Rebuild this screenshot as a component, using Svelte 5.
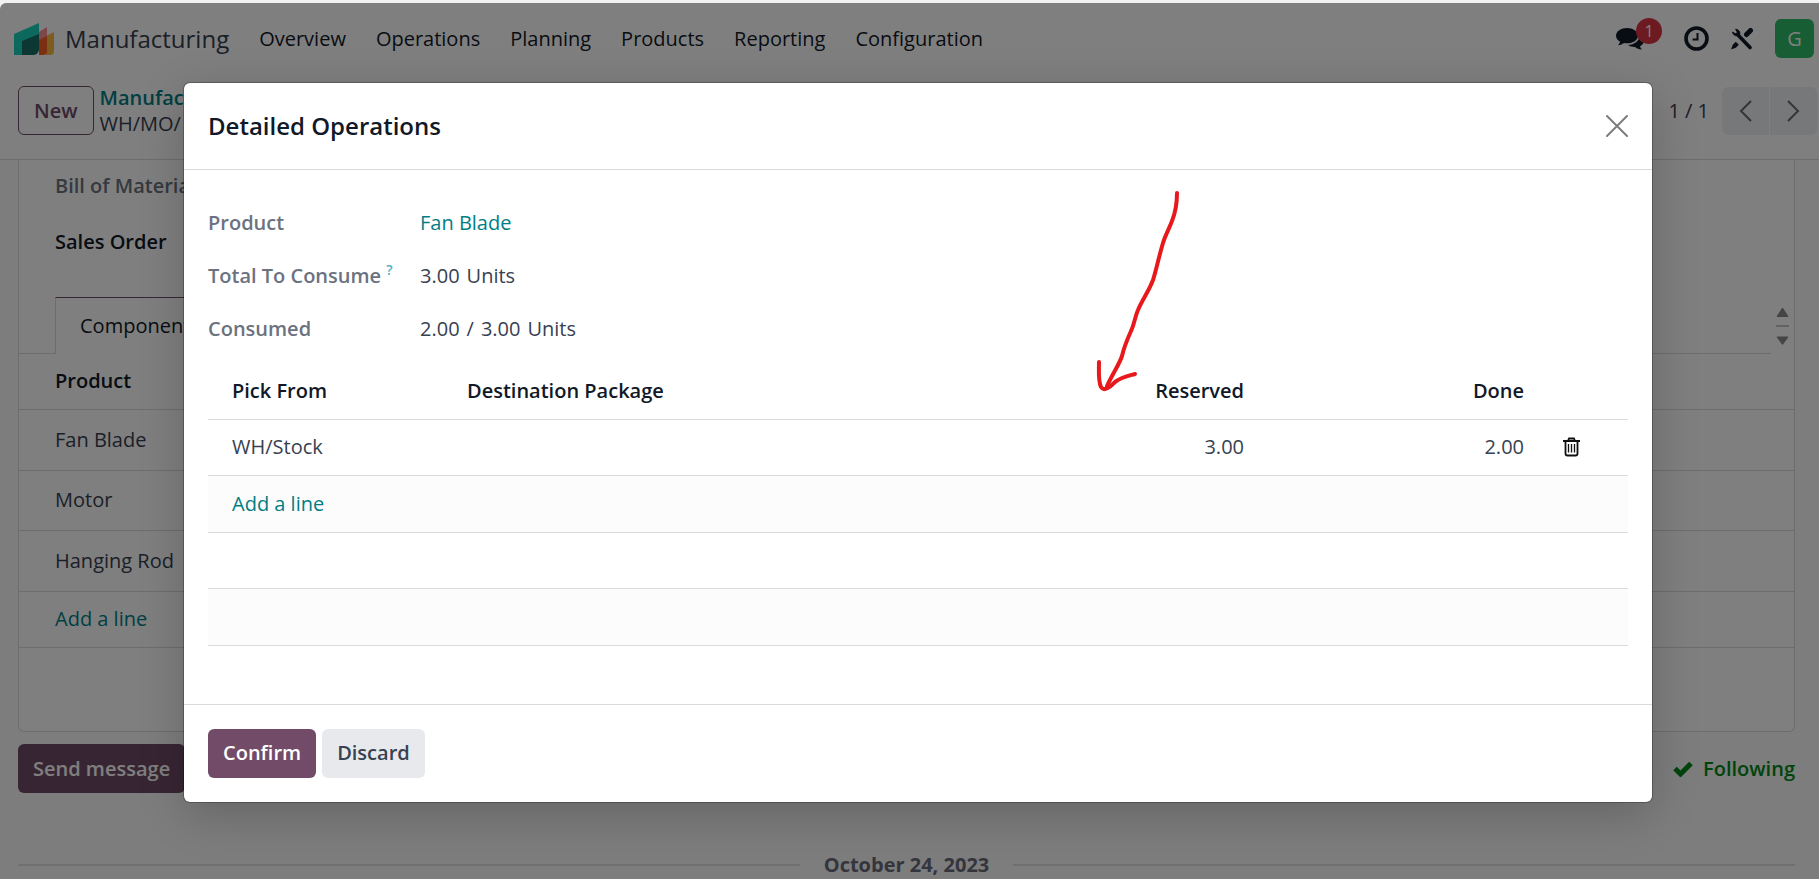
<script>
	// DATA
	const menus = ["Overview", "Operations", "Planning", "Products", "Reporting", "Configuration"];
	const components = ["Fan Blade", "Motor", "Hanging Rod"];

	// STATE
	let lines = $state([{ from: "WH/Stock", pack: "", reserved: 3, done: 2 }]);

	// METHODS
	function removeLine(index) {
		lines.splice(index, 1);
	}
</script>

<div class="page">
	<header class="navbar">
		<svg class="logo" viewBox="0 0 40 32" aria-hidden="true">
			<path fill="#fbb945" d="M32 13l8-4v19a4 4 0 0 1-4 4h-4z" />
			<path fill="#f86126" d="M25 10l8-5v23a4 4 0 0 1-4 4h-4z" />
			<path fill="#f78f97" d="M25 9l8-5v9l-8 4z" />
			<path fill="#1ad3bb" d="M0 11L25 0v26a6 6 0 0 1-6 6H0z" />
			<path fill="#1a6f66" d="M8 18l17-7v15a6 6 0 0 1-6 6H8z" />
		</svg>
		<a class="brand" href="#app">Manufacturing</a>
		<nav>
			{#each menus as menu}
				<a href="#app">{menu}</a>
			{/each}
		</nav>
		<div class="systray">
			<button class="chat" aria-label="Messages">
				<svg width="28" height="24" viewBox="0 0 28 24" fill="currentColor">
					<path d="M11 1C5 1 0 4.400 0 8.700c0 2.500 1.600 4.600 4.100 6-.4 1.500-1.200 2.500-2.100 3.500 2.700-.2 4.600-1.200 6-2.200 1 .2 2 .3 3 .3 6 0 11-3.300 11-7.600S17 1 11 1z" />
					<path d="M23.500 8.500c.2 5.300-5.200 9.400-11.500 9.600 1.800 1.300 4.200 2 7 1.900 1.700 1.400 3.700 2.300 7 2.500-1-1-1.700-2-2-3.300 2.400-1.300 3.900-3.100 3.900-5.300 0-2.200-1.700-4.200-4.400-5.400z" />
				</svg>
				<span class="badge">1</span>
			</button>
			<button aria-label="Activities">
				<svg width="25" height="25" viewBox="0 0 25 25" fill="none" stroke="currentColor">
					<circle cx="12.500" cy="12.500" r="10.500" stroke-width="3.600" />
					<path d="M13.500 7v6.500H8.500" stroke-width="2" />
				</svg>
			</button>
			<button aria-label="Tools">
				<svg width="22" height="22" viewBox="0 0 22 22" fill="none" stroke="currentColor">
					<path d="M7.500 7.500L19 19.500" stroke-width="3.600" stroke-linecap="round" />
					<path d="M1.500 4.200l3.200 1.600 1.600-1.600L4.700 1.200A4.300 4.300 0 0 1 8.600 7 4.500 4.500 0 0 1 1.500 4.200z" fill="currentColor" stroke-width="1" />
					<path d="M15.500 6.500L19.500 2.500" stroke-width="5" stroke-linecap="round" />
					<path d="M0 21.500l1.800-4.800 3-3 3 3-3 3z" fill="currentColor" stroke="none" />
				</svg>
			</button>
			<button class="avatar" aria-label="User">G</button>
		</div>
	</header>

	<div class="control-panel">
		<button class="btn outline">New</button>
		<div class="breadcrumb">
			<a href="#app">Manufacturing</a>
			<span>WH/MO/</span>
		</div>
		<div class="pager">
			<span>1 / 1</span>
			<div class="pager-buttons">
				<button aria-label="Previous">
					<svg width="13" height="22" viewBox="0 0 13 22" fill="none" stroke="currentColor" stroke-width="2"><path d="M12 1L2 11l10 10" /></svg>
				</button>
				<button aria-label="Next">
					<svg width="13" height="22" viewBox="0 0 13 22" fill="none" stroke="currentColor" stroke-width="2"><path d="M1 1l10 10L1 21" /></svg>
				</button>
			</div>
		</div>
	</div>

	<main>
		<section class="sheet">
			<div class="sheet-fields">
				<span class="muted">Bill of Material</span>
				<span>Sales Order</span>
			</div>
			<div class="tabs">
				<button class="tab">Components</button>
				<div class="tab-line"></div>
				<div class="scroller">
					<svg width="13" height="40" viewBox="0 0 13 40" fill="currentColor" aria-hidden="true">
						<path d="M6.500 2L12 10.500H1z" stroke="currentColor" stroke-linejoin="round" />
						<path d="M0 19.500h13v1H0z" />
						<path d="M6.500 38.500L12 31H1z" stroke="currentColor" stroke-linejoin="round" />
					</svg>
				</div>
			</div>
			<table class="components">
				<thead>
					<tr><th>Product</th></tr>
				</thead>
				<tbody>
					{#each components as component}
						<tr><td>{component}</td></tr>
					{/each}
					<tr class="add"><td><a href="#app">Add a line</a></td></tr>
				</tbody>
			</table>
		</section>

		<div class="chatter">
			<button class="btn primary">Send message</button>
			<button class="following">
				<svg width="20" height="16" viewBox="0 0 20 16" fill="none" stroke="currentColor" stroke-width="5"><path d="M2 7.500l5.500 5.500L18 2.500" /></svg>
				Following
			</button>
		</div>
		<div class="date"><span>October 24, 2023</span></div>
	</main>

	<div class="backdrop">
		<div class="modal" role="dialog" aria-labelledby="modal-title">
			<div class="modal-header">
				<h4 id="modal-title">Detailed Operations</h4>
				<button aria-label="Close">
					<svg width="22" height="22" viewBox="0 0 22 22" fill="none" stroke="currentColor" stroke-width="2" stroke-linecap="round"><path d="M1 1l20 20M21 1L1 21" /></svg>
				</button>
			</div>
			<div class="modal-body">
				<dl>
					<dt>Product</dt>
					<dd><a href="#app">Fan Blade</a></dd>
					<dt>Total To Consume <sup>?</sup></dt>
					<dd><span>3.00</span><span>Units</span></dd>
					<dt>Consumed</dt>
					<dd><span>2.00</span><span>/</span><span>3.00</span><span>Units</span></dd>
				</dl>
				<table class="operations">
					<thead>
						<tr>
							<th class="from">Pick From</th>
							<th>Destination Package</th>
							<th class="number">Reserved</th>
							<th class="number done">Done</th>
							<th class="action"></th>
						</tr>
					</thead>
					<tbody>
						{#each lines as line, i}
							<tr>
								<td>{line.from}</td>
								<td>{line.pack}</td>
								<td class="number">{line.reserved.toFixed(2)}</td>
								<td class="number">{line.done.toFixed(2)}</td>
								<td class="action">
									<button aria-label="Delete" onclick={() => removeLine(i)}>
										<svg width="17" height="20" viewBox="0 0 17 20" fill="none" stroke="currentColor" stroke-width="1.800">
											<path d="M0 4h17M2.500 4v12.500a2 2 0 0 0 2 2h8a2 2 0 0 0 2-2V4M5 4l1-2.500h5L12 4" />
											<path d="M5.500 7v8.500M8.500 7v8.500M11.500 7v8.500" stroke-width="1.300" />
										</svg>
									</button>
								</td>
							</tr>
						{/each}
						<tr><td colspan="5"><a href="#app">Add a line</a></td></tr>
						<tr><td colspan="5"></td></tr>
						<tr><td colspan="5"></td></tr>
					</tbody>
				</table>
				<svg class="arrow" viewBox="0 0 90 210" aria-hidden="true">
					<path d="M84 6C84 14 83 24 79 34C76 42 72 49 70 56C66 69 63 84 60 93C56 104 49 113 45 123C42 130 41 138 38 144C34 153 31 160 29 169C26 178 20 186 14 199" />
					<path d="M6 175C6 185 5 194 8 200C11 205 17 200 22 195C29 190 35 189 42 187" />
				</svg>
			</div>
			<div class="modal-footer">
				<button class="btn primary">Confirm</button>
				<button class="btn secondary">Discard</button>
			</div>
		</div>
	</div>
</div>

<style>
	:global(body) {
		background: #f1f1f1;
		overflow: hidden;
	}
	.page {
		position: relative;
		display: flex;
		flex-direction: column;
		height: calc(100vh - 3px);
		margin-top: 3px;
		border-top-left-radius: 6px;
		overflow: hidden;
		background: #f8fbf9;
		color: #374151;
		font-family: "Open Sans", "Noto Sans", sans-serif;
		font-size: 20px;
		line-height: 28px;
		white-space: nowrap;
	}
	button {
		display: flex;
		align-items: center;
		justify-content: center;
		padding: 0;
		border: 0;
		background: none;
		color: inherit;
		font: inherit;
		cursor: pointer;
	}
	a {
		color: #017e84;
		text-decoration: none;
	}
	.btn {
		height: 49px;
		padding: 0 15px;
		border-radius: 6px;
		font-weight: 600;
	}
	.primary {
		background: #714b67;
		color: #fff;
	}
	.secondary {
		background: #e7e9ed;
	}
	.outline {
		border: 1px solid #714b67;
		color: #714b67;
	}

	/* NAVBAR */
	.navbar {
		display: flex;
		align-items: center;
		flex: none;
		height: 71px;
		padding: 0 5px 0 14px;
		box-sizing: border-box;
		background: #fff;
	}
	.logo {
		width: 40px;
		height: 32px;
	}
	.brand {
		margin: 0 30px 0 11px;
		color: #374151;
		font-size: 24px;
	}
	nav {
		display: flex;
		gap: 30px;
	}
	nav a {
		color: #111827;
	}
	.systray {
		display: flex;
		align-items: center;
		gap: 22px;
		margin-left: auto;
		color: #111827;
	}
	.chat {
		position: relative;
		margin-right: 18px;
	}
	.badge {
		position: absolute;
		top: -9px;
		left: 20px;
		width: 26px;
		border-radius: 13px;
		background: #dc3545;
		color: #fff;
		font-size: 16px;
		line-height: 26px;
	}
	.avatar {
		width: 39px;
		height: 39px;
		border-radius: 6px;
		background: #2ebd69;
		color: #fff;
	}

	/* CONTROL PANEL */
	.control-panel {
		display: flex;
		align-items: center;
		flex: none;
		box-sizing: border-box;
		height: 86px;
		padding: 0 2px 12px 18px;
		border-bottom: 1px solid #d8dadd;
		background: #fff;
	}
	.breadcrumb {
		display: flex;
		flex-direction: column;
		margin-left: 6px;
		line-height: 26px;
	}
	.breadcrumb a {
		font-weight: 600;
	}
	.pager {
		display: flex;
		align-items: center;
		gap: 13px;
		margin-left: auto;
	}
	.pager-buttons {
		display: flex;
		gap: 1px;
		border-radius: 6px;
		overflow: hidden;
	}
	.pager-buttons button {
		width: 47px;
		height: 48px;
		background: #eff1f5;
		color: #6b6b6b;
	}

	/* SHEET */
	main {
		padding: 0 24px 0 18px;
	}
	.sheet {
		height: 571px;
		border: 1px solid #d8dadd;
		border-top: 0;
		border-radius: 0 0 6px 6px;
		background: #fff;
	}
	.sheet-fields {
		display: flex;
		flex-direction: column;
		gap: 28px;
		padding: 12px 36px 41px;
		color: #111827;
		font-weight: 600;
	}
	.sheet-fields .muted {
		color: #6b7280;
	}
	.tabs {
		display: flex;
		height: 57px;
	}
	.tabs::before {
		content: "";
		width: 36px;
		border-bottom: 1px solid #d8dadd;
	}
	.tab {
		padding: 0 24px;
		border: 1px solid #d8dadd;
		border-top-color: #714b67;
		border-bottom: 0;
		color: #111827;
	}
	.tab-line {
		flex: 1;
		border-bottom: 1px solid #d8dadd;
	}
	.scroller {
		display: flex;
		align-items: center;
		justify-content: center;
		width: 23px;
		color: #8a8a8a;
	}
	table {
		width: 100%;
		border-collapse: collapse;
	}
	th {
		color: #111827;
		font-weight: 600;
		text-align: left;
	}
	th, td {
		box-sizing: border-box;
		padding: 0;
		border-bottom: 1px solid #d8dadd;
	}
	.components th, .components td {
		height: 61px;
		padding-left: 36px;
	}
	.components tr:nth-child(2) td {
		height: 60px;
	}
	.components th {
		height: 55px;
	}
	.components .add td {
		height: 56px;
	}

	/* CHATTER */
	.chatter {
		display: flex;
		align-items: center;
		justify-content: space-between;
		margin-top: 12px;
	}
	.following {
		gap: 10px;
		color: #008818;
		font-weight: 600;
	}
	.date {
		display: flex;
		align-items: center;
		gap: 24px;
		margin-top: 58px;
		color: #6b6b7c;
		font-weight: 700;
	}
	.date::before, .date::after {
		content: "";
		flex: 1;
		height: 2px;
		background: #dfe1e2;
	}

	/* MODAL */
	.backdrop {
		position: absolute;
		inset: 0;
		display: flex;
		align-items: flex-start;
		justify-content: center;
		padding: 80px 0 0 17px;
		background: rgba(0, 0, 0, .5);
	}
	.modal {
		width: 100%;
		max-width: 1468px;
		border-radius: 6px;
		background: #fff;
		box-shadow: 0 0 0 1px rgba(0, 0, 0, .25), 0 12px 48px rgba(0, 0, 0, .2);
	}
	.modal-header {
		display: flex;
		align-items: center;
		justify-content: space-between;
		height: 86px;
		padding: 0 24px;
		border-bottom: 1px solid #d8dadd;
	}
	.modal-header button {
		color: #7d7d7d;
	}
	h4 {
		margin: 0;
		color: #111827;
		font-size: 24px;
		font-weight: 600;
	}
	.modal-body {
		position: relative;
		padding: 26px 24px 58px;
	}
	dl {
		display: grid;
		grid-template-columns: 212px 1fr;
		grid-auto-rows: 53px;
		align-items: center;
		margin: 0 0 9px;
	}
	dt {
		color: #6b7280;
		font-weight: 600;
	}
	dd {
		display: flex;
		gap: 7px;
		margin: 0;
	}
	sup {
		color: #4ab0c4;
		font-size: 14px;
		line-height: 14px;
	}
	.operations th, .operations td {
		height: 56px;
		padding-left: 24px;
	}
	.operations th {
		height: 55px;
	}
	.operations tbody tr:nth-child(even) {
		background: #fcfcfc;
	}
	.operations tbody tr:nth-child(even) td {
		height: 57px;
	}
	.operations .from {
		width: 235px;
	}
	.operations .number {
		text-align: right;
	}
	.operations .done {
		width: 280px;
	}
	.operations .action {
		width: 104px;
		padding-left: 39px;
		color: #111;
	}
	.arrow {
		position: absolute;
		top: 17px;
		left: 909px;
		width: 90px;
		height: 210px;
		fill: none;
		stroke: #e8191c;
		stroke-width: 4;
		stroke-linecap: round;
	}
	.modal-footer {
		display: flex;
		gap: 6px;
		padding: 24px;
		border-top: 1px solid #d8dadd;
	}
</style>
